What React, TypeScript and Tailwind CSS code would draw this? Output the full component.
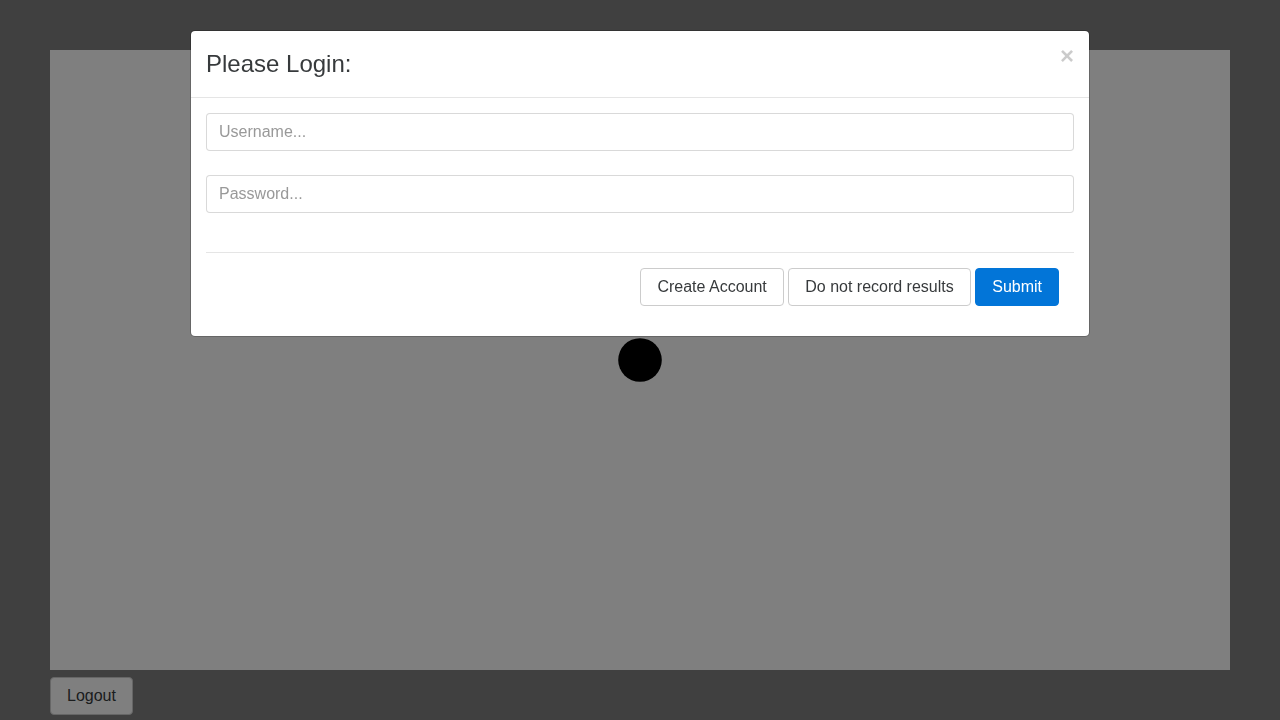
import { useState } from "react";

const buttonBase =
  "inline-block rounded border px-4 py-[6px] text-base leading-6 cursor-pointer";
const inputBase =
  "block w-full rounded border border-black/15 bg-white px-3 py-[6px] text-base leading-6 text-[#55595c] placeholder:text-[#999999] placeholder:opacity-100 outline-none focus:border-[#66afe9]";

export default function App() {
  const [open, setOpen] = useState(true);

  return (
    <div className="flex h-screen flex-col overflow-hidden bg-[#808080] px-[50px] pt-[50px] font-['Liberation_Sans',Arial,sans-serif] text-[#373a3c]">
      <main className="flex min-h-0 flex-1 items-center justify-center bg-white">
        <svg width="44" height="44" viewBox="0 0 44 44" aria-hidden="true">
          <circle cx="22" cy="22" r="21.8" fill="#000" />
        </svg>
      </main>
      <footer className="flex h-[50px] shrink-0 items-start pt-[7px]">
        <button type="button" className={`${buttonBase} border-[#cccccc] bg-white`} onClick={() => setOpen(true)}>
          Logout
        </button>
      </footer>

      {open && (
        <div className="fixed inset-0 overflow-y-auto bg-black/50">
          <div
            role="dialog"
            aria-modal="true"
            aria-labelledby="login-title"
            className="mx-auto mt-[30px] w-full max-w-[900px] rounded-[5px] border border-black/20 bg-white bg-clip-padding"
          >
            <header className="flex items-start justify-between border-b border-[#e5e5e5] p-[15px]">
              <h4 id="login-title" className="text-2xl leading-9">
                Please Login:
              </h4>
              <button
                type="button"
                aria-label="Close"
                className="cursor-pointer text-2xl leading-5 font-bold text-black opacity-20 [text-shadow:0_1px_0_#fff]"
                onClick={() => setOpen(false)}
              >
                ×
              </button>
            </header>
            <form className="p-[15px]" onSubmit={(e) => e.preventDefault()}>
              <input type="text" aria-label="Username" placeholder="Username..." className={inputBase} />
              <input type="password" aria-label="Password" placeholder="Password..." className={`${inputBase} mt-6`} />
              <div className="mt-[39px] border-t border-[#e5e5e5] p-[15px] text-right">
                <button type="button" className={`${buttonBase} border-[#cccccc] bg-white`}>
                  Create Account
                </button>{" "}
                <button type="button" className={`${buttonBase} border-[#cccccc] bg-white`}>
                  Do not record results
                </button>{" "}
                <button type="submit" className={`${buttonBase} border-[#0275d8] bg-[#0275d8] text-white`}>
                  Submit
                </button>
              </div>
            </form>
          </div>
        </div>
      )}
    </div>
  );
}
